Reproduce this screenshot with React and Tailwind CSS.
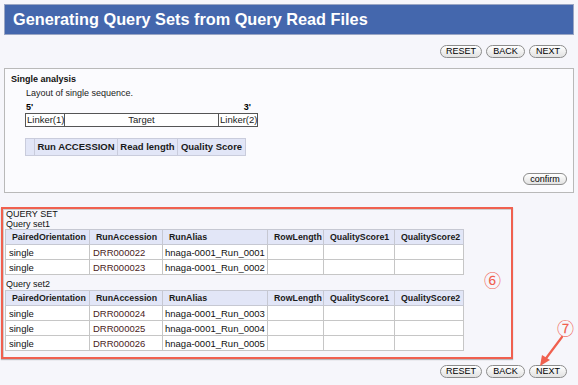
import React from "react";

const font = { fontFamily: '"Liberation Sans", Arial, sans-serif' };

const Btn = ({ label, w }) => (
  <div
    className={`h-[13px] ${w} rounded-full border border-[#8c8c8c] bg-gradient-to-b from-white to-[#e2e2e2] text-[9px] leading-[11px] text-black flex items-center justify-center`}
  >
    {label}
  </div>
);

const ButtonRow = ({ className }) => (
  <div className={`flex justify-end gap-[4px] pr-[11px] ${className}`}>
    <Btn label="RESET" w="w-[42px]" />
    <Btn label="BACK" w="w-[39px]" />
    <Btn label="NEXT" w="w-[38px]" />
  </div>
);

const cols = [
  { name: "PairedOrientation", w: 84 },
  { name: "RunAccession", w: 73 },
  { name: "RunAlias", w: 105 },
  { name: "RowLength", w: 56 },
  { name: "QualityScore1", w: 71 },
  { name: "QualityScore2", w: 69 },
];

const QueryTable = ({ rows }) => (
  <table className="table-fixed border-collapse w-[458px] text-[9.5px]">
    <colgroup>
      {cols.map((c) => (
        <col key={c.name} style={{ width: c.w }} />
      ))}
    </colgroup>
    <thead>
      <tr className="bg-[#e2e6f7]">
        {cols.map((c) => (
          <th
            key={c.name}
            className="h-[15px] p-0 pl-[6px] border border-[#c6c8d2] text-left font-bold text-[8.8px] text-[#1a1a1a] leading-[13px] whitespace-nowrap"
          >
            {c.name}
          </th>
        ))}
      </tr>
    </thead>
    <tbody>
      {rows.map((r) => (
        <tr key={r.acc} className="bg-white">
          <td className="h-[15px] p-0 border border-[#c6c6c6] pl-[3px] leading-[13px] text-[#111]">
            single
          </td>
          <td className="p-0 border border-[#c6c6c6] pl-[3px] leading-[13px] text-[#4a2222]">
            {r.acc}
          </td>
          <td className="p-0 border border-[#c6c6c6] pl-[2px] leading-[13px] text-[#111] whitespace-nowrap">
            {r.alias}
          </td>
          <td className="p-0 border border-[#c6c6c6]" />
          <td className="p-0 border border-[#c6c6c6]" />
          <td className="p-0 border border-[#c6c6c6]" />
        </tr>
      ))}
    </tbody>
  </table>
);

export default function App() {
  const set1 = [
    { acc: "DRR000022", alias: "hnaga-0001_Run_0001" },
    { acc: "DRR000023", alias: "hnaga-0001_Run_0002" },
  ];
  const set2 = [
    { acc: "DRR000024", alias: "hnaga-0001_Run_0003" },
    { acc: "DRR000025", alias: "hnaga-0001_Run_0004" },
    { acc: "DRR000026", alias: "hnaga-0001_Run_0005" },
  ];

  return (
    <div
      className="relative w-[578px] h-[385px] overflow-hidden bg-[#f6f6fb] flex flex-col"
      style={font}
    >
      {/* title bar */}
      <div className="mx-[4px] mt-[4px] h-[31px] bg-[#4467ad] border border-[#9aa6c4] flex items-center pl-[8px]">
        <span className="text-white font-bold text-[16.3px] leading-none">
          Generating Query Sets from Query Read Files
        </span>
      </div>

      <ButtonRow className="mt-[10px]" />

      {/* single analysis */}
      <div className="mx-[4px] mt-[10px] h-[125px] border border-[#b9b9b9] bg-[#fbfbfe] flex flex-col">
        <div className="pl-[6px] pt-[4px] text-[9px] font-bold leading-[12px] text-[#111]">
          Single analysis
        </div>
        <div className="pl-[21px] mt-[2px] text-[9px] leading-[12px] text-[#222]">
          Layout of single sequence.
        </div>
        <div className="ml-[20px] w-[232px] mt-[3px] flex justify-between text-[9px] font-bold leading-[10px] text-black">
          <span className="pl-[1px]">5'</span>
          <span className="pr-[6px]">3'</span>
        </div>
        <div className="ml-[20px] mt-[1px] w-[233px] h-[14px] flex border border-[#555] bg-white text-[9.5px] leading-[12px] text-[#222]">
          <div className="w-[39px] border-r border-[#555] pl-[1px]">Linker(1)</div>
          <div className="flex-1 text-center">Target</div>
          <div className="w-[39px] border-l border-[#555] pl-[1px]">Linker(2)</div>
        </div>
        <div className="ml-[20px] mt-[11px] w-[221px] h-[18px] flex bg-[#e2e6f7] border border-[#c9ccdc] text-[9.5px] font-bold leading-[16px] text-[#1a1a1a]">
          <div className="w-[9px] border-r border-[#c9ccdc]" />
          <div className="w-[83px] border-r border-[#c9ccdc] text-center">Run ACCESSION</div>
          <div className="w-[60px] border-r border-[#c9ccdc] text-center">Read length</div>
          <div className="flex-1 text-center">Quality Score</div>
        </div>
        <div className="mt-auto mb-[7px] mr-[6px] flex justify-end">
          <div className="w-[44px] h-[12px] rounded-full border border-[#8c8c8c] bg-gradient-to-b from-white to-[#e2e2e2] text-[9px] leading-[10px] text-black flex items-center justify-center">
            confirm
          </div>
        </div>
      </div>

      {/* query set (annotated) */}
      <div className="ml-[1px] mt-[14px] w-[512px] h-[152px] border-2 border-[#f0604f] shadow-[0_1px_1px_rgba(0,0,0,0.25)]">
        <div className="h-full border-t border-l border-[#cfcfcf] pl-[1px] text-[9px] text-[#111]">
          <div className="-mt-[1px] leading-[10px] pl-[1px]">QUERY SET</div>
          <div className="leading-[10px] pl-[1px]">Query set1</div>
          <QueryTable rows={set1} />
          <div className="mt-[4px] leading-[10px] pl-[1px]">Query set2</div>
          <div className="mt-[1px]">
            <QueryTable rows={set2} />
          </div>
        </div>
      </div>

      <ButtonRow className="mt-[6px]" />

      {/* annotations */}
      <span
        className="absolute left-[484px] top-[270px] text-[17px] leading-[20px] text-[#f0604f]"
        style={{ fontFamily: '"Noto Sans CJK JP", sans-serif' }}
      >
        ⑥
      </span>
      <span
        className="absolute left-[557px] top-[318px] text-[17px] leading-[20px] text-[#f0604f]"
        style={{ fontFamily: '"Noto Sans CJK JP", sans-serif' }}
      >
        ⑦
      </span>
      <svg className="absolute left-[530px] top-[332px]" width="40" height="40" viewBox="0 0 40 40">
        <line x1="32" y1="5" x2="14" y2="29" stroke="#f0604f" strokeWidth="2.2" strokeLinecap="round" />
        <polygon points="10,34 12,23 20,28" fill="#f0604f" />
      </svg>
    </div>
  );
}
